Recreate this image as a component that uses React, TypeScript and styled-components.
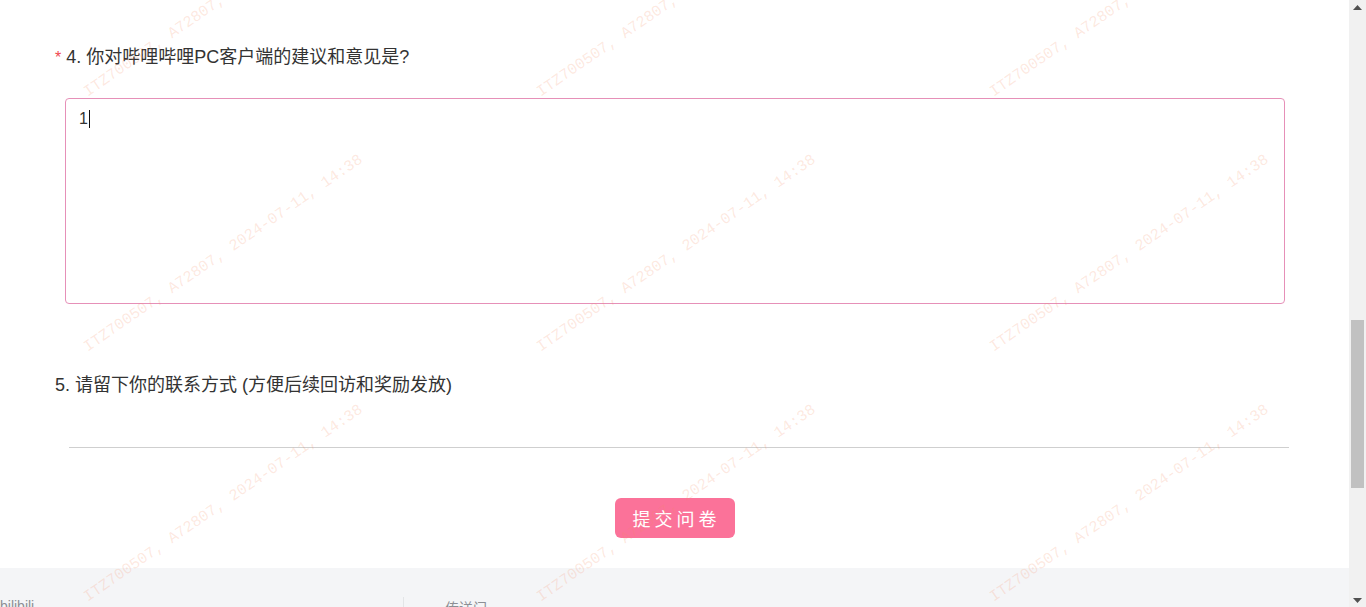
import React from "react";
import styled, { createGlobalStyle } from "styled-components";

const GlobalStyle = createGlobalStyle`
  html, body {
    margin: 0;
    padding: 0;
    background: #ffffff;
    overflow: hidden;
  }
  body {
    font-family: "Liberation Sans", "Noto Sans CJK SC", sans-serif;
    color: #333;
  }
  * { box-sizing: border-box; }
`;

const Shell = styled.div`
  display: flex;
  width: 1366px;
  height: 607px;
  overflow: hidden;
`;

const Page = styled.div`
  position: relative;
  flex: 0 0 1349px;
  display: flex;
  flex-direction: column;
  background: #fff;
  overflow: hidden;
`;

const Form = styled.div`
  display: flex;
  flex-direction: column;
  padding-top: 45px;
`;

const QuestionTitle = styled.div<{ $indent: number; $gap: number }>`
  margin-left: ${(p) => p.$indent}px;
  margin-top: ${(p) => p.$gap}px;
  height: 24px;
  line-height: 24px;
  font-size: 18px;
  color: #333;
  white-space: nowrap;
  display: flex;
  align-items: center;
`;

const Required = styled.span`
  color: #f0484f;
  font-size: 16px;
  line-height: 16px;
  margin-right: 5px;
  align-self: flex-start;
  margin-top: 5px;
`;

const TextBox = styled.div`
  margin-left: 65px;
  margin-top: 29px;
  width: 1220px;
  height: 206px;
  border: 1px solid #e690b8;
  border-radius: 4px;
  padding: 9px 13px;
  font-size: 16px;
  line-height: 22px;
  color: #333;
  display: flex;
  align-items: flex-start;
`;

const Caret = styled.span`
  display: inline-block;
  width: 1px;
  height: 18px;
  margin-top: 2px;
  margin-left: 1px;
  background: #111;
`;

const ContactInput = styled.div`
  margin-left: 69px;
  margin-top: 18px;
  width: 1220px;
  height: 33px;
  border-bottom: 1px solid #cfcfcf;
`;

const SubmitRow = styled.div`
  display: flex;
  justify-content: center;
  margin-top: 50px;
`;

const SubmitButton = styled.button`
  width: 120px;
  height: 40px;
  border: none;
  border-radius: 6px;
  background: #fb7299;
  color: #fff;
  font-family: "Noto Sans CJK SC", sans-serif;
  font-size: 18px;
  letter-spacing: 4px;
  padding: 0 0 0 4px;
  cursor: pointer;
`;

const Footer = styled.div`
  margin-top: 30px;
  flex: 1;
  background: #f4f5f7;
  display: flex;
  padding-top: 28px;
`;

const FooterCol = styled.div<{ $width: number; $divider?: boolean }>`
  width: ${(p) => p.$width}px;
  font-size: 14px;
  line-height: 20px;
  color: #8c8f94;
  border-left: ${(p) => (p.$divider ? "1px solid #e3e5e7" : "none")};
  padding-left: ${(p) => (p.$divider ? 41 : 0)}px;
  padding-top: ${(p) => (p.$divider ? 1 : 0)}px;
  margin-top: ${(p) => (p.$divider ? 1 : 0)}px;
`;

const WatermarkLayer = styled.div`
  position: absolute;
  inset: 0;
  pointer-events: none;
  overflow: hidden;
`;

const Watermark = styled.div`
  position: absolute;
  transform-origin: left bottom;
  transform: rotate(-34.6deg);
  font-family: "Liberation Mono", monospace;
  font-size: 15.5px;
  line-height: 16px;
  color: rgba(245, 140, 100, 0.2);
  white-space: nowrap;
`;

const Scrollbar = styled.div`
  flex: 0 0 17px;
  background: #f1f1f1;
  display: flex;
  flex-direction: column;
  align-items: center;
  justify-content: space-between;
  padding: 5px 0 4px;
`;

const Track = styled.div`
  flex: 1;
  width: 100%;
  display: flex;
  flex-direction: column;
  align-items: center;
  padding-top: 310px;
`;

const Thumb = styled.div`
  width: 13px;
  height: 168px;
  background: #c1c1c1;
`;

const Arrow = styled.svg`
  width: 9px;
  height: 5px;
  flex: 0 0 auto;
`;

const marks: { x: number; y: number }[] = [];
[90, 543, 996].forEach((x) => {
  [100, 355, 605].forEach((y) => marks.push({ x, y }));
});

export default function App() {
  return (
    <>
      <GlobalStyle />
      <Shell>
        <Page>
          <Form>
            <QuestionTitle $indent={55} $gap={0}>
              <Required>*</Required>
              4. 你对哔哩哔哩PC客户端的建议和意见是?
            </QuestionTitle>
            <TextBox>
              1<Caret />
            </TextBox>
            <QuestionTitle $indent={55} $gap={69}>
              5. 请留下你的联系方式 (方便后续回访和奖励发放)
            </QuestionTitle>
            <ContactInput />
            <SubmitRow>
              <SubmitButton>提交问卷</SubmitButton>
            </SubmitRow>
          </Form>
          <Footer>
            <FooterCol $width={403}>bilibili</FooterCol>
            <FooterCol $width={400} $divider>
              传送门
            </FooterCol>
          </Footer>
          <WatermarkLayer>
            {marks.map((m, i) => (
              <Watermark key={i} style={{ left: m.x, top: m.y - 16 }}>
                ITZ700507, A72807, 2024-07-11, 14:38
              </Watermark>
            ))}
          </WatermarkLayer>
        </Page>
        <Scrollbar>
          <Arrow viewBox="0 0 9 5">
            <polygon points="4.5,0 9,5 0,5" fill="#505050" />
          </Arrow>
          <Track>
            <Thumb />
          </Track>
          <Arrow viewBox="0 0 9 5">
            <polygon points="0,0 9,0 4.5,5" fill="#505050" />
          </Arrow>
        </Scrollbar>
      </Shell>
    </>
  );
}
